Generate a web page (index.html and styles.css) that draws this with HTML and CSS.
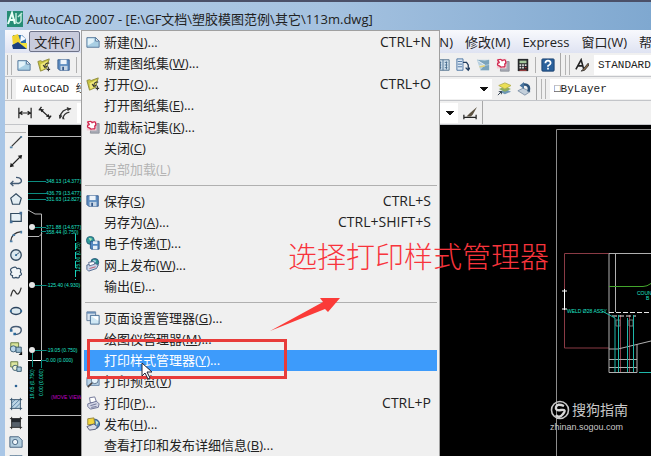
FILE: index.html
```
<!DOCTYPE html>
<html lang="zh-CN">
<head>
    <meta charset="UTF-8">
    <title>AutoCAD 2007</title>
    <link rel="stylesheet" href="styles.css">
</head>
<body>

    <!-- icons -->
    <svg class="defs" aria-hidden="true">
        <symbol id="i-new" viewBox="0 0 16 16"><path d="M1 3h10l4 4v7H1z" fill="#a9cfe4" stroke="#4f7196"/><path d="M2 4h7v4l-7 4z" fill="#e4f3fa"/><path d="M11 3v4h4z" fill="#fff" stroke="#4f7196"/></symbol>
        <symbol id="i-open" viewBox="0 0 16 16"><path d="M1 4l3-1 2 1 8-3-3 11-7 3z" fill="#c9c440" stroke="#8a8738"/><path d="M4 7l8-4-2 8-5 3z" fill="#efe77c"/><path d="M14 6c-3-1-5 1-5 4M7 8l2 3 3-2M13 10v5M11 13h4" stroke="#333" fill="none" stroke-width="1.200"/></symbol>
        <symbol id="i-save" viewBox="0 0 16 16"><path d="M1 2h13v12H3l-2-2z" fill="#5d8cc0" stroke="#34598a"/><path d="M4 2h7v5H4z" fill="#eef4fa"/><path d="M4 9h8v5H4z" fill="#c5d4e4"/><path d="M6 10h2v4H6z" fill="#34598a"/></symbol>
        <symbol id="i-mark" viewBox="0 0 16 16"><path d="M6 4h9v11H5z" fill="#a8abb5" stroke="#8d9099"/><path d="M1 1h11v11H1z" fill="#f6cdd5"/><path d="M3 2q3-1 4 1 4-2 4 1 1 2-1 3 1 4-2 3-3 1-4-1-3 0-2-3 3 0 1-2-2-2 0-2z" fill="#fff" stroke="#d02950" stroke-width="1.500"/></symbol>
        <symbol id="i-etrans" viewBox="0 0 16 16"><circle cx="5" cy="5" r="4.500" fill="#2f9c9b" stroke="#265f78"/><path d="M3 2l4 1-2 3z" fill="#b7e6b2"/><path d="M5 6h10v9H6l-1-1z" fill="#5487c0" stroke="#2c5385"/><path d="M8 6h5v3H8zM8 11h5v4H8z" fill="#e6eef7"/></symbol>
        <symbol id="i-web" viewBox="0 0 16 16"><circle cx="10" cy="5" r="4.500" fill="#288d8c" stroke="#264f78"/><path d="M8 2l4 1-3 4z" fill="#a9d9ee"/><path d="M1 8l9-2 4 2-2 4-9 3-2-2z" fill="#cbd6e8" stroke="#49628a"/><path d="M3 5l6-1 1 3-6 2z" fill="#fff" stroke="#54678b"/><path d="M4 12l7-2" stroke="#c14e63"/></symbol>
        <symbol id="i-page" viewBox="0 0 16 16"><path d="M1 1h10v10H1z" fill="#dbe6f2" stroke="#5a7595"/><path d="M1 1h10v2H1z" fill="#6b8fb7"/><path d="M5 5h10v10H5z" fill="#d0e8f5" stroke="#3e658e"/><path d="M6 6h8v5z" fill="#fff"/></symbol>
        <symbol id="i-preview" viewBox="0 0 16 16"><path d="M1 4h14v9H1z" fill="#b9d3e7" stroke="#5b7da0"/><circle cx="10" cy="7" r="4" fill="#e7f5fd" stroke="#4b6381"/><path d="M7 10l-5 5" stroke="#4a4342" stroke-width="2"/></symbol>
        <symbol id="i-print" viewBox="0 0 16 16"><path d="M4 2l6-1 2 6-7 1z" fill="#fff" stroke="#666b90"/><path d="M2 9l10-3 3 3-1 4-9 2-3-3z" fill="#d3d6e6" stroke="#666b90"/><path d="M5 11l7-2M6 13l6-1" stroke="#666b90"/></symbol>
        <symbol id="i-publish" viewBox="0 0 16 16"><circle cx="10" cy="8" r="5.500" fill="#5188bb" stroke="#2c4d76"/><path d="M2 2l7-1 1 7-8 1z" fill="#f2d63e" stroke="#8f7f35"/><path d="M1 11l8-3 4 3-2 3-7 1z" fill="#d8dce8" stroke="#515773"/><path d="M11 4l3 2-2 4z" fill="#d1ecd0"/></symbol>
        <symbol id="i-dimh" viewBox="0 0 16 16"><path d="M1 2v12M15 2v12M2 8h12M5 6L2 8l3 2M11 6l3 2-3 2" stroke="#222" fill="none" stroke-width="1.400"/></symbol>
        <symbol id="i-dima" viewBox="0 0 16 16"><path d="M4 1L1 5M15 11l-3 4M3 4l10 9" stroke="#222" stroke-width="1.500"/><path d="M2 3l5 1-3 3zM14 13l-5-1 3-3z" fill="#222"/></symbol>
        <symbol id="i-dimc" viewBox="0 0 16 16"><path d="M2 14C3 6 8 3 15 3M6 14c0-4 3-6 7-7" stroke="#333" fill="none" stroke-width="1.500"/><path d="M1 10l1 5 3-4zM10 1l5 2-4 3zM5 12v3h3z" fill="#333"/></symbol>
        <symbol id="i-table" viewBox="0 0 16 16"><path d="M1 2h14v12H1z" fill="#cfe0ec" stroke="#4a6b88"/><path d="M8 2v12M3 5h3M3 8h3M3 11h3M10 5h3M10 8h3M10 11h3M5 4v9M12 4v9" stroke="#466a8b"/></symbol>
        <symbol id="i-props" viewBox="0 0 16 16"><path d="M1 1h7v13H1z" fill="#dce8f4" stroke="#456f9f"/><path d="M2 4h5M2 7h5M2 10h5" stroke="#456f9f"/><path d="M8 5h4l2 3v5M11 11l3 3 2-3" stroke="#223d5e" fill="none" stroke-width="1.500"/></symbol>
        <symbol id="i-sheet" viewBox="0 0 16 16"><path d="M1 2h14v12H5z" fill="#b7d0e0"/><path d="M1 2l9 1 5-1v5l-5 1zM5 14l4-5 6-1v6z" fill="#7ba3bb"/><path d="M2 3l8 5-6 1" stroke="#eef4f8" fill="none"/><path d="M4 10l6-1" stroke="#e3d27a" stroke-width="2"/></symbol>
        <symbol id="i-calc" viewBox="0 0 16 16"><path d="M2 1h12v14H2z" fill="#26282b"/><path d="M4 3h8v3H4z" fill="#a4c79b"/><path d="M4 8h2M7 8h2M10 8h2M4 11h2M7 11h2" stroke="#ddd" stroke-width="2"/><path d="M10 11h2M4 14h8" stroke="#d24a4a"/></symbol>
        <symbol id="i-help" viewBox="0 0 16 16"><rect x="1" y="1" width="14" height="14" rx="1" fill="#2b619c" stroke="#183e6d"/><path d="M5 6q0-3 3-3t3 3q0 1-3 3v1M8 11v2" stroke="#fff" fill="none" stroke-width="2"/></symbol>
        <symbol id="i-style" viewBox="0 0 16 16"><path d="M1 13L7 2l3 11M3 9h6" stroke="#222" fill="none" stroke-width="1.800"/><path d="M15 6l-6 7-2 2 4-1 5-6z" fill="#8c6b48" stroke="#333"/></symbol>
        <symbol id="i-layers" viewBox="0 0 16 16"><path d="M3 11l7-3 6 3-7 3z" fill="#6f98b6"/><path d="M2 8l7-3 7 3-7 3z" fill="#8fae5f"/><path d="M2 4l7-3 7 3-7 4z" fill="#ebdf55" stroke="#b5b04e"/><path d="M1 15l4-4M2 11h3v3" stroke="#234" fill="none"/></symbol>
        <symbol id="i-layerp" viewBox="0 0 16 16"><path d="M1 10l6-3 8 4-6 4z" fill="#c3cfdb" stroke="#7e91a6"/><path d="M13 11C15 5 12 2 7 3" fill="none" stroke="#2b5178" stroke-width="3"/><path d="M8 0L3 4l5 4z" fill="#49749d"/></symbol>
        <symbol id="i-brush" viewBox="0 0 16 16"><path d="M1 10v5M15 10v5M1 13h14" stroke="#222" stroke-width="1.400"/><path d="M16 1L8 8l-4 4h5l2-2z" fill="#5b5140"/></symbol>
        <!-- draw toolbar -->
        <symbol id="d-line" viewBox="0 0 16 16"><path d="M3 13L14 2" stroke="#333" stroke-width="1.300"/><path d="M1 13h3v2H1zM13 1h2v2h-2z" fill="#5684a8"/></symbol>
        <symbol id="d-xline" viewBox="0 0 16 16"><path d="M2 14L14 2" stroke="#222" stroke-width="1.300"/><path d="M1 15l1-5 4 4zM15 1l-1 5-4-4z" fill="#222"/></symbol>
        <symbol id="d-pline" viewBox="0 0 16 16"><path d="M2 12h9q4-1 3-4t-6-3M5 9l-3 3 3 3" stroke="#435a73" fill="none" stroke-width="1.600"/></symbol>
        <symbol id="d-poly" viewBox="0 0 16 16"><path d="M8 2l6 5-2 7H4L2 7z" fill="#e4eef3" stroke="#334b60" stroke-width="1.400"/></symbol>
        <symbol id="d-rect" viewBox="0 0 16 16"><path d="M2 4h12v9H2z" fill="#e7f0f5" stroke="#334b60" stroke-width="1.400"/><path d="M1 12h3v3H1zM12 2h3v3h-3z" fill="#466f96"/></symbol>
        <symbol id="d-arc" viewBox="0 0 16 16"><path d="M2 14Q3 4 14 3" stroke="#333" fill="none" stroke-width="1.400"/><path d="M1 13h3v2H1zM4 6h3v2H4zM13 2h2v3h-2z" fill="#4d7fa8"/></symbol>
        <symbol id="d-circle" viewBox="0 0 16 16"><circle cx="8" cy="8" r="6" fill="#dce9ef" stroke="#334b60" stroke-width="1.500"/><path d="M8 8l4-3" stroke="#334b60"/><path d="M7 7h2v2H7z" fill="#2c6898"/></symbol>
        <symbol id="d-cloud" viewBox="0 0 16 16"><path d="M4 2q4-2 5 1 6-1 4 4 3 3-1 4 0 4-4 2-5 2-4-2-4-1-1-4Q0 4 4 2z" fill="#f2f6f8" stroke="#39526a" stroke-width="1.400"/></symbol>
        <symbol id="d-spline" viewBox="0 0 16 16"><path d="M2 13C5 2 6 6 8 9s4 1 6-6" stroke="#333" fill="none" stroke-width="1.400"/></symbol>
        <symbol id="d-ellipse" viewBox="0 0 16 16"><ellipse cx="8" cy="8" rx="6" ry="4" fill="#dce9ef" stroke="#2b435e" stroke-width="1.600"/><path d="M1 7h2v2H1zM13 7h2v2h-2z" fill="#2c6898"/></symbol>
        <symbol id="d-earc" viewBox="0 0 16 16"><path d="M2 8Q2 4 8 4t6 4-5 5H7" fill="none" stroke="#465b73" stroke-width="1.600"/><path d="M1 7h3v3H1zM5 11h3v3H5z" fill="#2c6898"/></symbol>
        <symbol id="d-insert" viewBox="0 0 16 16"><path d="M2 2h9v7H2z" fill="#d9e49a" stroke="#5d7238"/><circle cx="5" cy="9" r="3.500" fill="#b7d4e8" stroke="#31536c"/><path d="M8 7h6v6H8z" fill="#9abcd0" stroke="#31536c"/><path d="M15 12v4h-4z" fill="#111"/></symbol>
        <symbol id="d-block" viewBox="0 0 16 16"><path d="M2 2h8v6H2z" fill="#dce59d" stroke="#5d7238"/><circle cx="7" cy="9" r="3" fill="#e9f1d6" stroke="#31536c"/><path d="M9 8h5v5H9z" fill="#abcbdc" stroke="#31536c"/></symbol>
        <symbol id="d-point" viewBox="0 0 16 16"><circle cx="8" cy="8" r="1.500" fill="#2a6193"/></symbol>
        <symbol id="d-hatch" viewBox="0 0 16 16"><path d="M3 3h10v10H3z" fill="#bcd4e4"/><path d="M3 7l4-4M3 12l9-9M7 13l6-6" stroke="#547da1"/><path d="M1 3h14M1 13h14M3 1v14M13 1v14" stroke="#2d4964"/></symbol>
        <symbol id="d-grad" viewBox="0 0 16 16"><path d="M3 3h10v10H3z" fill="#56606b"/><path d="M3 3h10v4H3z" fill="#22272e"/><path d="M1 3h14M1 13h14M3 1v14M13 1v14" stroke="#222"/></symbol>
        <symbol id="d-region" viewBox="0 0 16 16"><path d="M1 2h10l4 4v8H1z" fill="#b3cddd" stroke="#3b5a78"/><circle cx="7" cy="8" r="3" fill="#f1f6fa" stroke="#3b5a78"/></symbol>
    </svg>

    <div class="window">
        <header class="titlebar">
            <svg class="logo" viewBox="0 0 16 16"><path d="M0 0h16v16H0z" fill="#268d75"/><path d="M1 13L5 2l3 11M3 9h5" stroke="#e8fff6" fill="none" stroke-width="2"/><path d="M9 2v9q3 3 5-1V3M11 6l4-4" stroke="#bfe9da" fill="none" stroke-width="1.500"/></svg>
            <h1>AutoCAD 2007 - [E:\GF文档\塑胶模图范例\其它\113m.dwg]</h1>
        </header>

        <nav class="menubar">
            <svg class="doc" viewBox="0 0 18 18"><path d="M2 2h9l4 4v6H2z" fill="#2d6fae"/><path d="M1 3l6-2 3 9-8 2z" fill="#f0d432"/><path d="M10 2l5 4-6 3z" fill="#f8fbff"/><path d="M2 10h14v6H2z" fill="#f3e23c"/><path d="M1 12l6-3 9 7H2z" fill="#1b3f80"/></svg>
            <div class="menubar-main">
                <button class="menu-btn open" aria-expanded="true">文件(F)</button>
                <button class="menu-btn">标注(N)</button>
            </div>
            <button class="menu-btn">修改(M)</button>
            <button class="menu-btn">Express</button>
            <button class="menu-btn">窗口(W)</button>
            <button class="menu-btn">帮助(H)</button>
        </nav>

        <div class="toolrow">
            <div class="toolbar standard">
                <span class="grip"></span>
                <button class="tool" aria-label="新建"><svg><use href="#i-new"/></svg></button>
                <button class="tool" aria-label="打开"><svg><use href="#i-open"/></svg></button>
                <button class="tool" aria-label="保存"><svg><use href="#i-save"/></svg></button>
                <span class="tool-sep"></span>
                <button class="tool push" aria-label="设计中心"><svg><use href="#i-table"/></svg></button>
                <button class="tool" aria-label="工具选项板"><svg><use href="#i-props"/></svg></button>
                <button class="tool" aria-label="图纸集"><svg><use href="#i-sheet"/></svg></button>
                <button class="tool" aria-label="标记集"><svg><use href="#i-mark"/></svg></button>
                <button class="tool" aria-label="计算器"><svg><use href="#i-calc"/></svg></button>
                <span class="tool-sep"></span>
                <button class="tool" aria-label="帮助"><svg><use href="#i-help"/></svg></button>
            </div>
            <div class="toolbar rest">
                <span class="grip"></span>
                <button class="tool" aria-label="文字样式"><svg><use href="#i-style"/></svg></button>
                <select class="combo" aria-label="文字样式名"><option>STANDARD</option></select>
            </div>
        </div>

        <div class="toolrow">
            <div class="toolbar layers">
                <span class="grip"></span>
                <select class="combo arrow" aria-label="工作空间"><option>AutoCAD 经典</option></select>
                <button class="tool" aria-label="图层特性"><svg><use href="#i-layers"/></svg></button>
                <button class="tool" aria-label="上一个图层"><svg><use href="#i-layerp"/></svg></button>
            </div>
            <div class="toolbar rest">
                <span class="grip"></span>
                <select class="combo" aria-label="颜色"><option>□ByLayer</option></select>
            </div>
        </div>

        <div class="toolrow">
            <div class="toolbar dims">
                <button class="tool" aria-label="线性"><svg><use href="#i-dimh"/></svg></button>
                <button class="tool" aria-label="对齐"><svg><use href="#i-dima"/></svg></button>
                <button class="tool" aria-label="弧长"><svg><use href="#i-dimc"/></svg></button>
                <select class="combo arrow" aria-label="标注样式"><option></option></select>
                <button class="tool" aria-label="更新标注"><svg><use href="#i-brush"/></svg></button>
            </div>
        </div>

        <div class="work">
            <div class="draw-tools">
                <button class="tool" aria-label="直线"><svg><use href="#d-line"/></svg></button>
                <button class="tool" aria-label="构造线"><svg><use href="#d-xline"/></svg></button>
                <button class="tool" aria-label="多段线"><svg><use href="#d-pline"/></svg></button>
                <button class="tool" aria-label="正多边形"><svg><use href="#d-poly"/></svg></button>
                <button class="tool" aria-label="矩形"><svg><use href="#d-rect"/></svg></button>
                <button class="tool" aria-label="圆弧"><svg><use href="#d-arc"/></svg></button>
                <button class="tool" aria-label="圆"><svg><use href="#d-circle"/></svg></button>
                <button class="tool" aria-label="修订云线"><svg><use href="#d-cloud"/></svg></button>
                <button class="tool" aria-label="样条曲线"><svg><use href="#d-spline"/></svg></button>
                <button class="tool" aria-label="椭圆"><svg><use href="#d-ellipse"/></svg></button>
                <button class="tool" aria-label="椭圆弧"><svg><use href="#d-earc"/></svg></button>
                <button class="tool" aria-label="插入块"><svg><use href="#d-insert"/></svg></button>
                <button class="tool" aria-label="创建块"><svg><use href="#d-block"/></svg></button>
                <button class="tool" aria-label="点"><svg><use href="#d-point"/></svg></button>
                <button class="tool" aria-label="图案填充"><svg><use href="#d-hatch"/></svg></button>
                <button class="tool" aria-label="渐变色"><svg><use href="#d-grad"/></svg></button>
                <button class="tool" aria-label="面域"><svg><use href="#d-region"/></svg></button>
                <button class="tool" aria-label="表格"><svg><use href="#i-table"/></svg></button>
            </div>

            <div class="canvas">
                <svg class="drawing" width="623" height="332" viewBox="28 125 623 332">
                    <!-- left view -->
                    <g fill="none" stroke="#b8b8b8">
                        <path d="M28 136.500H82M28 415.500H82"/>
                        <path d="M28 210l7 4h6.500V368M28 236.500h11l3-3"/>
                        <path d="M28 360.500h13" stroke="#fff"/>
                    </g>
                    <g stroke="#0c8c80">
                        <path d="M28 181.500h18M28 193.500h18M28 199.500h18M35 227.500h11M41 231.500h5M35 285.500h11M35 350.500h11M41 360.500h5M32.500 353v14M41.500 360v8"/>
                    </g>
                    <g fill="#e6e6e6"><circle cx="32" cy="227" r="3"/><circle cx="32" cy="285" r="3"/><circle cx="32" cy="350" r="3"/></g>
                    <g class="cad-text">
                        <text x="46" y="183">348.13 (14.377)</text>
                        <text x="46" y="195">436.79 (13.477)</text>
                        <text x="46" y="201">331.63 (12.827)</text>
                        <text x="46" y="229">371.88 (14.677)</text>
                        <text x="46" y="234">358.44 (0.750)</text>
                        <text x="46" y="287">-125.40 (4.930)</text>
                        <text x="46" y="352">-19.05 (0.750)</text>
                        <text x="46" y="362">0.00 (0.000)</text>
                        <text transform="translate(34 399) rotate(-90)">19.05 (0.750)</text>
                        <text transform="translate(43 396) rotate(-90)">0.00 (0.000)</text>
                        <text transform="translate(80 272) rotate(-90)">125.00 (0.75)</text>
                        <text class="magenta" x="51" y="399">(MOVE VIEW)</text>
                    </g>
                    <path d="M75.500 234v46" stroke="#19d3bd" stroke-dasharray="7 2"/>

                    <!-- right view -->
                    <path d="M556.500 456V129.500H651" fill="none" stroke="#8c8c8c"/>
                    <g fill="none" stroke="#8a3b45"><path d="M609 253.500h-44.500V348H609M620.500 315v57M629.500 315v57"/></g>
                    <path d="M564.500 289v21M562 291h5M562 309h5" stroke="#fff"/>
                    <g fill="none" stroke="#b0b0b0">
                        <path d="M651 253.500H609V372.500h28V344M615.500 253v59M609 349h9l33-8M609 359.500h28M609 367.500h28"/>
                        <path d="M609 312.500h42M612 316h24" stroke="#e8e8e8" stroke-dasharray="5 2"/>
                        <path d="M616 320h4v6h-4zM629 320h4v6h-4z" stroke="#777"/>
                    </g>
                    <path d="M609 286.500h34q4 0 8-3" fill="none" stroke="#43a52c"/>
                    <g fill="none" stroke="#1fb8aa"><path d="M602 311l13 7v54M618.500 315v57M627.500 318v54M633.500 315v57M639 372.500h12"/></g>
                    <g class="cad-text">
                        <text x="567" y="313">WELD Ø28 ASSY</text>
                        <text x="637" y="295">COUNT</text>
                        <text x="646" y="300">B</text>
                    </g>
                </svg>
            </div>
        </div>

        <!-- 文件 menu -->
        <div class="popup">
            <div class="group seven">
                <button class="item"><svg><use href="#i-new"/></svg><span>新建(<u>N</u>)...</span><kbd>CTRL+N</kbd></button>
                <button class="item"><span>新建图纸集(<u>W</u>)...</span></button>
                <button class="item"><svg><use href="#i-open"/></svg><span>打开(<u>O</u>)...</span><kbd>CTRL+O</kbd></button>
                <button class="item"><span>打开图纸集(<u>E</u>)...</span></button>
                <button class="item"><svg><use href="#i-mark"/></svg><span>加载标记集(<u>K</u>)...</span></button>
                <button class="item"><span>关闭(<u>C</u>)</span></button>
                <button class="item" disabled><span>局部加载(<u>L</u>)</span></button>
            </div>
            <hr>
            <div class="group five">
                <button class="item"><svg><use href="#i-save"/></svg><span>保存(<u>S</u>)</span><kbd>CTRL+S</kbd></button>
                <button class="item"><span>另存为(<u>A</u>)...</span><kbd>CTRL+SHIFT+S</kbd></button>
                <button class="item"><svg><use href="#i-etrans"/></svg><span>电子传递(<u>T</u>)...</span></button>
                <button class="item"><svg><use href="#i-web"/></svg><span>网上发布(<u>W</u>)...</span></button>
                <button class="item"><span>输出(<u>E</u>)...</span></button>
            </div>
            <hr>
            <div class="group seven">
                <button class="item"><svg><use href="#i-page"/></svg><span>页面设置管理器(<u>G</u>)...</span></button>
                <button class="item"><span>绘图仪管理器(<u>M</u>)...</span></button>
                <button class="item selected"><span>打印样式管理器(<u>Y</u>)...</span></button>
                <button class="item"><svg><use href="#i-preview"/></svg><span>打印预览(<u>V</u>)</span></button>
                <button class="item"><svg><use href="#i-print"/></svg><span>打印(<u>P</u>)...</span><kbd>CTRL+P</kbd></button>
                <button class="item"><svg><use href="#i-publish"/></svg><span>发布(<u>H</u>)...</span></button>
                <button class="item"><span>查看打印和发布详细信息(<u>B</u>)...</span></button>
            </div>
        </div>

        <!-- notes on top -->
        <div class="red-box"></div>
        <svg class="red-arrow" viewBox="0 0 70 34"><path d="M0 33L53 4l-3-4h20L58 14l-3-3z" fill="#fb3b38"/></svg>
        <p class="note">选择打印样式管理器</p>
        <svg class="cursor" viewBox="0 0 12 18"><path d="M1 1v13l3-3 3 6 2-1-3-6h5z" fill="#fff" stroke="#223"/></svg>

        <div class="watermark">
            <div class="brand">
                <svg viewBox="0 0 20 20"><circle cx="10" cy="10" r="8.500" fill="none" stroke="#c8c8c8" stroke-width="1.600"/><path d="M14 6Q7 3 6 7t5 3 2 4-7 1" fill="none" stroke="#d8d8d8" stroke-width="2.400"/></svg>
                <span>搜狗指南</span>
            </div>
            <div class="site">zhinan.sogou.com</div>
        </div>
    </div>

</body>
</html>
```
FILE: styles.css
```
*{
    box-sizing: border-box;
}

body{
    margin: 0;
    font-family: "Open Sans", "Noto Sans CJK SC", sans-serif;
    font-size: 13px;
    color: #222;
}

button{
    font: inherit;
    color: inherit;
    border: 0;
    padding: 0;
    background: none;
    white-space: nowrap;
}

.defs{
    position: absolute;
    width: 0;
    height: 0;
}

.window{
    position: relative;
    display: flex;
    flex-direction: column;
    height: 100vh;
    overflow: hidden;
    padding-left: 5px;
    border-top: 2px solid #4b5068;
    background-color: #a9c6e6;
}

/* title */
.titlebar{
    display: flex;
    align-items: center;
    gap: 4px;
    height: 28px;
    margin-left: -5px;
    padding: 6px 2px 0 7px;
    background: linear-gradient(to right, #b3cce6, #a5c2e0 50%, #7fa8d0);
}

.logo{
    width: 16px;
    height: 16px;
}

.titlebar h1{
    margin: 0;
    font-size: 13px;
    line-height: 20px;
    font-weight: normal;
    white-space: nowrap;
}

/* menu bar */
.menubar{
    display: flex;
    align-items: center;
    gap: 12px;
    height: 23px;
    padding-left: 6px;
    background: linear-gradient(#f8f9fd, #dfe3f2);
}

.menubar .doc{
    flex: none;
    width: 18px;
    height: 18px;
    margin-right: -12px;
}

.menubar-main{
    flex: none;
    display: flex;
    justify-content: space-between;
    width: 424px;
}

.menu-btn{
    flex: none;
    height: 21px;
}

.menu-btn.open{
    width: 51px;
    border: 1px solid #6e7388;
    border-radius: 2px;
    background-color: #c8cbdc;
}

/* toolbars */
.toolrow{
    display: flex;
    height: 24px;
    padding-left: 2px;
    background-color: #f0f0f0;
    border-bottom: 1px solid #c3c5c9;
}

.toolbar{
    flex: none;
    display: flex;
    align-items: center;
    gap: 4px;
    padding-right: 4px;
    border-right: 1px solid #a8a8a8;
}

.standard{
    width: 554px;
}

.layers{
    width: 530px;
}

.dims{
    width: 476px;
    padding-left: 10px;
}

.toolbar.rest{
    flex: 1;
    min-width: 0;
    padding-left: 4px;
    padding-right: 0;
    border-right: 0;
}

.grip{
    flex: none;
    width: 5px;
    height: 20px;
    border: solid #b4b4b4;
    border-width: 0 1px;
}

.tool{
    flex: none;
    display: flex;
    align-items: center;
    justify-content: center;
    width: 16px;
    height: 16px;
}

.tool svg{
    width: 14px;
    height: 14px;
}

.tool.push{
    margin-left: auto;
}

.tool-sep{
    width: 1px;
    height: 16px;
    background-color: #b0b0b0;
}

.combo{
    flex: 1;
    min-width: 0;
    height: 20px;
    appearance: none;
    border: 0;
    border-radius: 0;
    padding: 0 0 0 4px;
    background-color: #fff;
    color: #222;
    font-family: "Liberation Mono", "Noto Sans CJK SC", monospace;
    font-size: 11px;
}

.combo.arrow{
    padding-left: 7px;
    background-image: linear-gradient(to bottom right, #111 50%, transparent 51%), linear-gradient(to bottom left, #111 50%, transparent 51%);
    background-repeat: no-repeat;
    background-size: 4px 4px;
    background-position: right 4px center, right 8px center;
}

/* drawing area */
.work{
    flex: 1;
    display: flex;
    min-height: 0;
    background-color: #f0f0f0;
}

.draw-tools{
    flex: none;
    display: grid;
    grid-template-rows: repeat(18, 1fr);
    place-items: center;
    width: 21px;
    height: 338px;
    margin: 7px 2px 0 0;
    border-top: 1px solid #b4b4b4;
}

.canvas{
    flex: 1;
    min-width: 0;
    overflow: hidden;
    background-color: #000;
}

.drawing{
    display: block;
}

.cad-text{
    fill: #1fe0c8;
    font-family: "Liberation Sans", sans-serif;
    font-size: 5px;
}

.cad-text .magenta{
    fill: #c000c8;
}

/* popup menu */
.popup{
    position: absolute;
    left: 81px;
    top: 28px;
    width: 359px;
    padding: 0 2px;
    border: 1px solid #a0a0a0;
    background-color: #f0f0f0;
}

.group{
    display: grid;
    grid-auto-rows: 1fr;
}

.seven{
    height: 149px;
}

.five{
    height: 107px;
}

.popup hr{
    margin: 5px 0 4px 1px;
    border: 0;
    border-top: 1px solid #b0b0b0;
}

.item{
    display: grid;
    grid-template-columns: 14px 1fr auto;
    column-gap: 4px;
    align-items: center;
    min-height: 0;
    padding: 0 6px 0 2px;
    text-align: left;
    line-height: 20px;
}

.item svg{
    width: 14px;
    height: 14px;
}

.item span{
    grid-column: 2;
}

.item u{
    text-underline-offset: 1px;
}

.item kbd{
    font: inherit;
    font-size: 14px;
}

.item:disabled{
    color: #b4b4b4;
}

.item.selected{
    background-color: #3d9bfb;
    color: #fff;
}

/* notes */
.red-box{
    position: absolute;
    left: 87px;
    top: 337px;
    width: 200px;
    height: 40px;
    border: 3px solid #e83c3a;
}

.red-arrow{
    position: absolute;
    left: 270px;
    top: 296px;
    width: 70px;
    height: 34px;
}

.note{
    position: absolute;
    left: 288px;
    top: 233px;
    margin: 0;
    color: #f8343c;
    font-family: "Noto Sans CJK SC", sans-serif;
    font-size: 29px;
    font-weight: 300;
    line-height: 40px;
    white-space: nowrap;
}

.cursor{
    position: absolute;
    left: 141px;
    top: 360px;
    width: 12px;
    height: 18px;
}

.watermark{
    position: absolute;
    left: 550px;
    top: 398px;
    color: #c8c8c8;
}

.brand{
    display: flex;
    align-items: center;
    gap: 2px;
    font-size: 14px;
    line-height: 20px;
}

.brand svg{
    width: 20px;
    height: 20px;
}

.site{
    font-family: "Liberation Sans", sans-serif;
    font-size: 9px;
    line-height: 14px;
}
```
